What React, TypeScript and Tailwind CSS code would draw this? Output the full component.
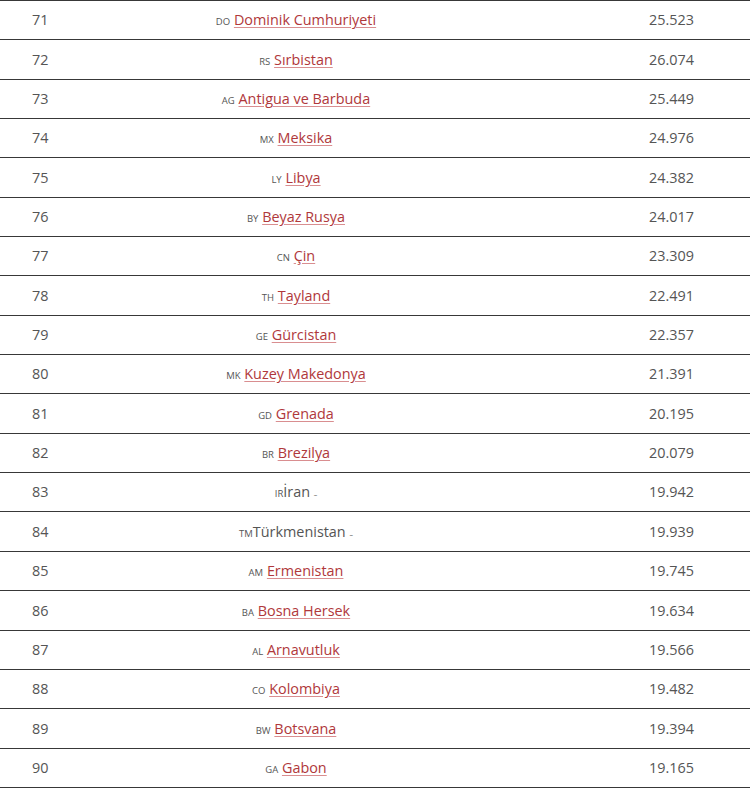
const rows: { n: number; code: string; name: string; value: string; link: boolean }[] = [
  { n: 71, code: "DO", name: "Dominik Cumhuriyeti", value: "25.523", link: true },
  { n: 72, code: "RS", name: "Sırbistan", value: "26.074", link: true },
  { n: 73, code: "AG", name: "Antigua ve Barbuda", value: "25.449", link: true },
  { n: 74, code: "MX", name: "Meksika", value: "24.976", link: true },
  { n: 75, code: "LY", name: "Libya", value: "24.382", link: true },
  { n: 76, code: "BY", name: "Beyaz Rusya", value: "24.017", link: true },
  { n: 77, code: "CN", name: "Çin", value: "23.309", link: true },
  { n: 78, code: "TH", name: "Tayland", value: "22.491", link: true },
  { n: 79, code: "GE", name: "Gürcistan", value: "22.357", link: true },
  { n: 80, code: "MK", name: "Kuzey Makedonya", value: "21.391", link: true },
  { n: 81, code: "GD", name: "Grenada", value: "20.195", link: true },
  { n: 82, code: "BR", name: "Brezilya", value: "20.079", link: true },
  { n: 83, code: "IR", name: "İran", value: "19.942", link: false },
  { n: 84, code: "TM", name: "Türkmenistan", value: "19.939", link: false },
  { n: 85, code: "AM", name: "Ermenistan", value: "19.745", link: true },
  { n: 86, code: "BA", name: "Bosna Hersek", value: "19.634", link: true },
  { n: 87, code: "AL", name: "Arnavutluk", value: "19.566", link: true },
  { n: 88, code: "CO", name: "Kolombiya", value: "19.482", link: true },
  { n: 89, code: "BW", name: "Botsvana", value: "19.394", link: true },
  { n: 90, code: "GA", name: "Gabon", value: "19.165", link: true },
];

export default function App() {
  return (
    <div className="w-[750px] h-[789px] bg-white font-['Open_Sans',sans-serif] text-[14.4px] text-[#555]">
      <div className="border-t border-[#383838]">
        {rows.map((r) => (
          <div
            key={r.n}
            className="grid grid-cols-[80px_432px_1fr] items-center h-[39.35px] border-b border-[#383838]"
          >
            <div className="pl-[32px]">{r.n}</div>
            <div className="text-center">
              <span className="text-[9.5px] uppercase">{r.code}</span>
              {r.link ? (
                <>
                  {" "}
                  <a href="#" className="text-[#b0383b] underline decoration-[#d98e90] underline-offset-2">
                    {r.name}
                  </a>
                </>
              ) : (
                <>
                  {r.name} <span className="text-[7px]">–</span>
                </>
              )}
            </div>
            <div className="text-right pr-[56px]">{r.value}</div>
          </div>
        ))}
      </div>
    </div>
  );
}
